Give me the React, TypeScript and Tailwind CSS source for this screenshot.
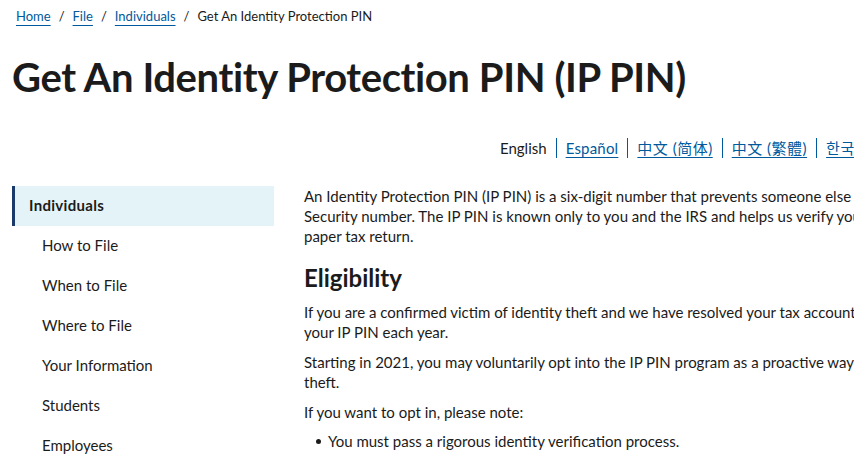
import React from "react";

const font = { fontFamily: "Lato, 'Noto Sans CJK SC', sans-serif" };

function Crumb({ children }: { children: React.ReactNode }) {
  return (
    <a className="text-[#00599c] underline decoration-[#00599c] underline-offset-[4px]" href="#">
      {children}
    </a>
  );
}

const langs = [
  { t: "Español", cjk: false },
  { t: "中文 (简体)", cjk: true },
  { t: "中文 (繁體)", cjk: true },
  { t: "한국어", cjk: true },
  { t: "Русский", cjk: false },
  { t: "Tiếng Việt", cjk: false },
];

const side = ["How to File", "When to File", "Where to File", "Your Information", "Students", "Employees", "Military"];

export default function App() {
  return (
    <div className="w-[854px] h-[457px] overflow-hidden bg-white text-[#1b1b1b]" style={font}>
      <div className="w-[1200px]">
        <nav className="h-[33px] flex items-center pl-[16px] text-[13px] gap-[8px]">
          <Crumb>Home</Crumb>
          <span>/</span>
          <Crumb>File</Crumb>
          <span>/</span>
          <Crumb>Individuals</Crumb>
          <span>/</span>
          <span>Get An Identity Protection PIN</span>
        </nav>
        <h1 className="mt-[20px] pl-[12px] text-[40px] leading-[48px] font-bold tracking-[-0.4px]">
          Get An Identity Protection PIN (IP PIN)
        </h1>
        <div className="mt-[35px] pl-[500px] flex items-center h-[24px] text-[15px]">
          <span className="pr-[9px]">English</span>
          {langs.map((l) => (
            <span key={l.t} className="border-l border-[#00599c] px-[9px] h-[20px] flex items-center">
              <a
                href="#"
                className={
                  l.cjk
                    ? "text-[#00599c] underline underline-offset-[3px] tracking-[0.5px]"
                    : "text-[#00599c] underline underline-offset-[3px] tracking-[0.2px]"
                }
              >
                {l.t}
              </a>
            </span>
          ))}
        </div>
        <div className="mt-[26px] flex">
          <aside className="ml-[12px] w-[262px] text-[15px]">
            <div className="h-[40px] flex items-center bg-[#e4f3f8] border-l-[3px] border-[#1a3a6b] pl-[14px] pb-[1px] font-bold tracking-[0.3px]">
              Individuals
            </div>
            {side.map((s) => (
              <div key={s} className="h-[40px] flex items-center pl-[30px] pb-[1px]">
                {s}
              </div>
            ))}
          </aside>
          <main className="ml-[30px] text-[15px] leading-[20px] whitespace-nowrap">
            <p>
              An Identity Protection PIN (IP PIN) is a six-digit number that prevents someone else from filing a tax return using your Social
              <br />
              Security number. The IP PIN is known only to you and the IRS and helps us verify your identity when you file your electronic or
              <br />
              paper tax return.
            </p>
            <h2 className="mt-[17px] text-[24px] leading-[30px] font-bold">Eligibility</h2>
            <p className="mt-[9px]">
              If you are a confirmed victim of identity theft and we have resolved your tax account issues, we'll mail you a CP01A Notice with
              <br />
              your IP PIN each year.
            </p>
            <p className="mt-[10px]">
              Starting in 2021, you may voluntarily opt into the IP PIN program as a proactive way to protect yourself from tax-related identity
              <br />
              theft.
            </p>
            <p className="mt-[10px]">If you want to opt in, please note:</p>
            <ul className="mt-[9px]">
              <li className="flex items-center h-[20px]">
                <span className="ml-[12px] w-[5px] h-[5px] rounded-full bg-[#1b1b1b]" />
                <span className="ml-[7px]">You must pass a rigorous identity verification process.</span>
              </li>
              <li className="flex items-center h-[20px] mt-[8px]">
                <span className="ml-[12px] w-[5px] h-[5px] rounded-full bg-[#1b1b1b]" />
                <span className="ml-[7px]">Spouses and dependents are eligible for an IP PIN if they can pass the identity verification process.</span>
              </li>
            </ul>
          </main>
        </div>
      </div>
    </div>
  );
}
